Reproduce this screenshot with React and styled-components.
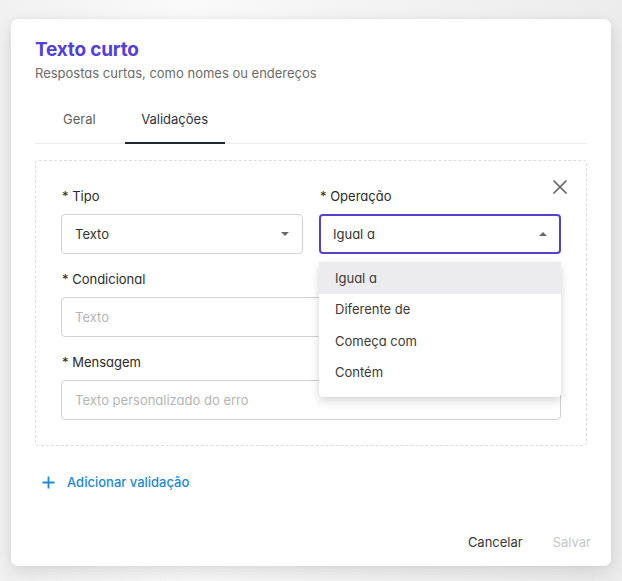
import React from "react";
import styled, { createGlobalStyle } from "styled-components";

const Global = createGlobalStyle`
  html, body { margin: 0; padding: 0; }
  body {
    width: 622px; height: 581px; overflow: hidden;
    font-family: Inter, "Noto Sans", sans-serif;
    background: linear-gradient(90deg, #f1f1f1 0%, #fafafa 30%, #f4f4f4 55%, #ececec 100%);
  }
`;

const Page = styled.div`
  box-sizing: border-box;
  width: 622px;
  height: 581px;
  padding: 19px 11px 15px 11px;
`;

const Card = styled.div`
  box-sizing: border-box;
  width: 600px;
  height: 547px;
  background: #fff;
  border-radius: 7px;
  box-shadow: 0 6px 18px rgba(0, 0, 0, 0.12), 0 0 4px rgba(0, 0, 0, 0.04);
  padding: 19px 22px 0 24px;
  display: flex;
  flex-direction: column;
`;

const Title = styled.h1`
  margin: 0;
  font-size: 19px;
  line-height: 24px;
  font-weight: 700;
  color: #5440d2;
  letter-spacing: -0.2px;
`;

const Subtitle = styled.p`
  margin: 1px 0 0;
  font-size: 13px;
  line-height: 20px;
  color: #6b6b6b;
  font-feature-settings: "cv11" 1;
`;

const TabList = styled.div`
  display: flex;
  gap: 13px;
  padding-left: 12px;
  margin-top: 17px;
  margin-right: 2px;
  border-bottom: 1px solid #ececec;
`;

const Tab = styled.div`
  padding: 9px 16px 13px;
  font-size: 13px;
  line-height: 20px;
  color: ${(p) => (p.$active ? "#2f3340" : "#5f5f5f")};
  border-bottom: 2px solid ${(p) => (p.$active ? "#1e2533" : "transparent")};
  margin-bottom: -1px;
  min-width: ${(p) => (p.$active ? "100px" : "auto")};
  box-sizing: border-box;
  text-align: center;
`;

const RuleBox = styled.div`
  position: relative;
  margin-top: 16px;
  margin-right: 2px;
  border: 1.5px dashed #dcdcdc;
  border-radius: 4px;
  padding: 25px 25px 25px;
  display: flex;
  flex-direction: column;
  gap: 15px;
`;

const Close = styled.button`
  position: absolute;
  top: 17px;
  right: 17px;
  width: 18px;
  height: 18px;
  padding: 0;
  border: none;
  background: none;
  display: flex;
  align-items: center;
  justify-content: center;
`;

const Row = styled.div`
  display: grid;
  grid-template-columns: 242px 242px;
  gap: 16px;
`;

const Field = styled.div`
  position: relative;
  display: flex;
  flex-direction: column;
`;

const Label = styled.label`
  font-size: 13px;
  line-height: 20px;
  color: #2a2a2a;
  margin-bottom: 8px;
  font-feature-settings: "cv11" 1;
  padding-left: 1px;
`;

const Control = styled.div`
  box-sizing: border-box;
  height: 40px;
  border: ${(p) => (p.$focused ? "2px solid #5641c8" : "1px solid #d2d2d2")};
  border-radius: 4px;
  display: flex;
  align-items: center;
  padding: 0 ${(p) => (p.$focused ? "12px" : "13px")} 0 ${(p) => (p.$focused ? "12px" : "13px")};
  font-size: 13px;
  color: ${(p) => (p.$placeholder ? "#b5b5b5" : "#333")};
  font-feature-settings: "cv11" 1;
  background: #fff;
`;

const Value = styled.span`
  flex: 1;
`;

const Caret = styled.span`
  width: 0;
  height: 0;
  border-left: 4.5px solid transparent;
  border-right: 4.5px solid transparent;
  ${(p) =>
    p.$up
      ? "border-bottom: 4.5px solid #6a6a6a;"
      : "border-top: 4.5px solid #6a6a6a;"}
`;

const Menu = styled.ul`
  position: absolute;
  top: 76px;
  left: 0;
  width: 242px;
  margin: 0;
  padding: 0 0 9px;
  list-style: none;
  background: #fff;
  border-radius: 4px;
  box-shadow: 0 4px 10px rgba(0, 0, 0, 0.16), 0 0 2px rgba(0, 0, 0, 0.06);
  z-index: 2;
`;

const Option = styled.li`
  height: 31.5px;
  display: flex;
  align-items: center;
  padding: 0 16px;
  font-size: 13px;
  color: #3a3a3a;
  font-feature-settings: "cv11" 1;
  background: ${(p) => (p.$active ? "#ececee" : "transparent")};
`;

const AddLink = styled.button`
  align-self: flex-start;
  margin-top: 28px;
  margin-left: 7px;
  border: none;
  background: none;
  padding: 0;
  display: flex;
  align-items: center;
  gap: 12px;
  font-family: Inter, sans-serif;
  font-size: 13px;
  font-weight: 500;
  color: #1d8ad0;
`;

const Footer = styled.div`
  margin-top: auto;
  margin-right: -2px;
  display: flex;
  justify-content: flex-end;
  gap: 30px;
  padding: 0 0 14px;
`;

const FooterButton = styled.button`
  border: none;
  background: none;
  padding: 0;
  font-family: Inter, sans-serif;
  font-size: 13px;
  line-height: 20px;
  color: ${(p) => (p.$disabled ? "#c6c6c6" : "#363636")};
`;

export default function App() {
  return (
    <>
      <Global />
      <Page>
        <Card>
          <Title>Texto curto</Title>
          <Subtitle>Respostas curtas, como nomes ou endereços</Subtitle>
          <TabList>
            <Tab>Geral</Tab>
            <Tab $active>Validações</Tab>
          </TabList>
          <RuleBox>
            <Close aria-label="Fechar">
              <svg width="14" height="14" viewBox="0 0 14 14">
                <path d="M1 1L13 13M13 1L1 13" stroke="#666" strokeWidth="1.7" strokeLinecap="round" />
              </svg>
            </Close>
            <Row>
              <Field>
                <Label>* Tipo</Label>
                <Control>
                  <Value>Texto</Value>
                  <Caret />
                </Control>
              </Field>
              <Field>
                <Label>* Operação</Label>
                <Control $focused>
                  <Value>Igual a</Value>
                  <Caret $up />
                </Control>
                <Menu>
                  <Option $active>Igual a</Option>
                  <Option>Diferente de</Option>
                  <Option>Começa com</Option>
                  <Option>Contém</Option>
                </Menu>
              </Field>
            </Row>
            <Field>
              <Label>* Condicional</Label>
              <Control $placeholder>
                <Value>Texto</Value>
              </Control>
            </Field>
            <Field>
              <Label>* Mensagem</Label>
              <Control $placeholder>
                <Value>Texto personalizado do erro</Value>
              </Control>
            </Field>
          </RuleBox>
          <AddLink>
            <svg width="13" height="13" viewBox="0 0 13 13">
              <path d="M6.5 0.5V12.5M0.5 6.5H12.5" stroke="#1d8ad0" strokeWidth="1.8" />
            </svg>
            Adicionar validação
          </AddLink>
          <Footer>
            <FooterButton>Cancelar</FooterButton>
            <FooterButton $disabled>Salvar</FooterButton>
          </Footer>
        </Card>
      </Page>
    </>
  );
}
